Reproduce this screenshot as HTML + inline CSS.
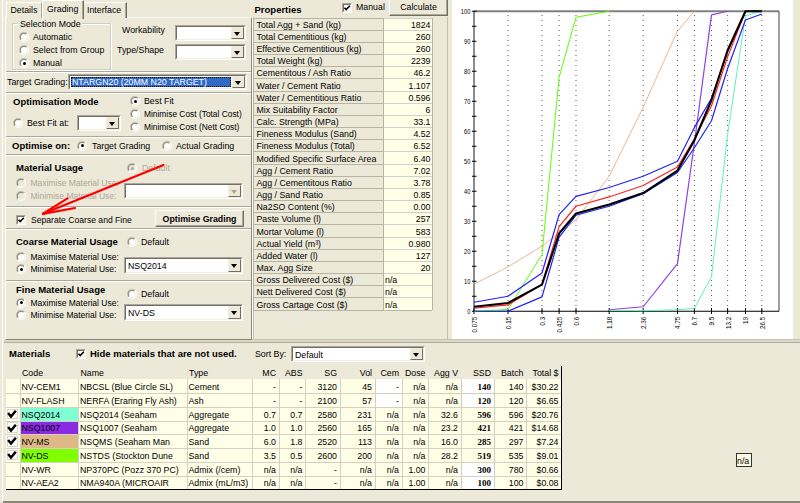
<!DOCTYPE html><html><head><meta charset="utf-8"><style>
body{margin:0;width:800px;height:503px;overflow:hidden;background:#ECE9D8;position:relative;font-family:"Liberation Sans",sans-serif;}
.t{position:absolute;white-space:nowrap;color:#000}
.r{position:absolute;box-sizing:border-box}
svg.r{position:absolute}
</style></head><body>
<div class="r" style="left:2px;top:0px;width:1px;height:501px;background:#FFFFFF"></div>
<div class="r" style="left:5px;top:17px;width:247px;height:323px;border-top:1px solid #fff;border-left:1px solid #fff;border-right:1px solid #8A887C;border-bottom:1px solid #8A887C"></div>
<div class="r" style="left:6px;top:2px;width:36px;height:16px;background:#ECE9D8;border-top:1px solid #fff;border-left:1px solid #fff;border-right:1px solid #ACA899"></div>
<div class="t" style="left:10.5px;top:3.80px;font-size:8.8px;line-height:12px;">Details</div>
<div class="r" style="left:42px;top:0px;width:42px;height:19px;background:#ECE9D8;border-top:1px solid #fff;border-left:1px solid #fff;border-right:1px solid #716F64;box-shadow:inset -1px 0 0 #ACA899"></div>
<div class="t" style="left:47px;top:2.50px;font-size:8.8px;line-height:12px;">Grading</div>
<div class="r" style="left:84px;top:2px;width:43px;height:16px;background:#ECE9D8;border-top:1px solid #fff;border-right:1px solid #716F64;box-shadow:inset -1px 0 0 #ACA899"></div>
<div class="t" style="left:87px;top:4.00px;font-size:8.8px;line-height:12px;">Interface</div>
<div class="r" style="left:12px;top:23px;width:99px;height:47px;border:1px solid #D0D0BF;box-shadow:inset 1px 1px 0 #fff, 1px 1px 0 #fff;box-sizing:border-box"></div>
<div class="r" style="left:18px;top:19px;width:64px;height:10px;background:#ECE9D8"></div>
<div class="t" style="left:20px;top:17.50px;font-size:8.8px;line-height:12px;">Selection Mode</div>
<div class="r" style="left:19.00px;top:32.00px;width:10px;height:10px;border-radius:50%;background:linear-gradient(135deg,#C0BCAE 0%,#C0BCAE 50%,#fff 50%,#fff 100%)"></div>
<div class="r" style="left:20.00px;top:33.00px;width:8px;height:8px;border-radius:50%;background:linear-gradient(135deg,#8E8C80 0%,#8E8C80 50%,#F1EFE2 50%,#F1EFE2 100%)"></div>
<div class="r" style="left:21.00px;top:34.00px;width:6px;height:6px;border-radius:50%;background:#fff"></div>
<div class="t" style="left:33px;top:31.00px;font-size:8.8px;line-height:12px;">Automatic</div>
<div class="r" style="left:19.00px;top:45.00px;width:10px;height:10px;border-radius:50%;background:linear-gradient(135deg,#C0BCAE 0%,#C0BCAE 50%,#fff 50%,#fff 100%)"></div>
<div class="r" style="left:20.00px;top:46.00px;width:8px;height:8px;border-radius:50%;background:linear-gradient(135deg,#8E8C80 0%,#8E8C80 50%,#F1EFE2 50%,#F1EFE2 100%)"></div>
<div class="r" style="left:21.00px;top:47.00px;width:6px;height:6px;border-radius:50%;background:#fff"></div>
<div class="t" style="left:33px;top:44.00px;font-size:8.8px;line-height:12px;">Select from Group</div>
<div class="r" style="left:19.00px;top:58.00px;width:10px;height:10px;border-radius:50%;background:linear-gradient(135deg,#C0BCAE 0%,#C0BCAE 50%,#fff 50%,#fff 100%)"></div>
<div class="r" style="left:20.00px;top:59.00px;width:8px;height:8px;border-radius:50%;background:linear-gradient(135deg,#8E8C80 0%,#8E8C80 50%,#F1EFE2 50%,#F1EFE2 100%)"></div>
<div class="r" style="left:21.00px;top:60.00px;width:6px;height:6px;border-radius:50%;background:#fff"></div>
<div class="r" style="left:22.50px;top:61.50px;width:3px;height:3px;border-radius:50%;background:#000"></div>
<div class="t" style="left:33px;top:57.00px;font-size:8.8px;line-height:12px;">Manual</div>
<div class="t" style="left:122px;top:24.00px;font-size:8.8px;line-height:12px;">Workability</div>
<div class="t" style="left:117px;top:43.50px;font-size:8.8px;line-height:12px;">Type/Shape</div>
<div class="r" style="left:175px;top:25px;width:71px;height:16px;background:#fff;border-top:1px solid #ACA899;border-left:1px solid #ACA899;border-right:1px solid #fff;border-bottom:1px solid #fff;box-sizing:border-box"></div>
<div class="r" style="left:176px;top:26px;width:69px;height:14px;border-top:1px solid #716F64;border-left:1px solid #716F64;border-right:1px solid #F1EFE2;border-bottom:1px solid #F1EFE2;box-sizing:border-box"></div>
<div class="r" style="left:231px;top:27px;width:13px;height:12px;background:#ECE9D8;border-top:1px solid #F1EFE2;border-left:1px solid #F1EFE2;border-right:1px solid #716F64;border-bottom:1px solid #716F64;box-sizing:border-box"></div>
<div class="r" style="left:234.00px;top:31.50px;width:0;height:0;border-left:3.5px solid transparent;border-right:3.5px solid transparent;border-top:4px solid #000"></div>
<div class="r" style="left:175px;top:44px;width:71px;height:16px;background:#fff;border-top:1px solid #ACA899;border-left:1px solid #ACA899;border-right:1px solid #fff;border-bottom:1px solid #fff;box-sizing:border-box"></div>
<div class="r" style="left:176px;top:45px;width:69px;height:14px;border-top:1px solid #716F64;border-left:1px solid #716F64;border-right:1px solid #F1EFE2;border-bottom:1px solid #F1EFE2;box-sizing:border-box"></div>
<div class="r" style="left:231px;top:46px;width:13px;height:12px;background:#ECE9D8;border-top:1px solid #F1EFE2;border-left:1px solid #F1EFE2;border-right:1px solid #716F64;border-bottom:1px solid #716F64;box-sizing:border-box"></div>
<div class="r" style="left:234.00px;top:50.50px;width:0;height:0;border-left:3.5px solid transparent;border-right:3.5px solid transparent;border-top:4px solid #000"></div>
<div class="r" style="left:6px;top:71px;width:245px;height:1px;background:#ACA899"></div>
<div class="r" style="left:6px;top:72px;width:245px;height:1px;background:#FFFFFF"></div>
<div class="t" style="left:7px;top:76.00px;font-size:8.8px;line-height:12px;">Target Grading:</div>
<div class="r" style="left:68px;top:74px;width:179px;height:16px;background:#fff;border-top:1px solid #ACA899;border-left:1px solid #ACA899;border-right:1px solid #fff;border-bottom:1px solid #fff;box-sizing:border-box"></div>
<div class="r" style="left:69px;top:75px;width:177px;height:14px;border-top:1px solid #716F64;border-left:1px solid #716F64;border-right:1px solid #F1EFE2;border-bottom:1px solid #F1EFE2;box-sizing:border-box"></div>
<div class="r" style="left:232px;top:76px;width:13px;height:12px;background:#ECE9D8;border-top:1px solid #F1EFE2;border-left:1px solid #F1EFE2;border-right:1px solid #716F64;border-bottom:1px solid #716F64;box-sizing:border-box"></div>
<div class="r" style="left:235.00px;top:80.50px;width:0;height:0;border-left:3.5px solid transparent;border-right:3.5px solid transparent;border-top:4px solid #000"></div>
<div class="r" style="left:71px;top:77px;width:160px;height:10px;background:#316AC5;outline:1px dotted #000;outline-offset:-1px"></div>
<div class="t" style="left:72px;top:76.00px;font-size:8.8px;line-height:12px;color:#fff;">NTARGN20 (20MM N20 TARGET)</div>
<div class="r" style="left:6px;top:92px;width:245px;height:1px;background:#ACA899"></div>
<div class="r" style="left:6px;top:93px;width:245px;height:1px;background:#FFFFFF"></div>
<div class="t" style="left:13px;top:95.50px;font-size:9.5px;line-height:12px;font-weight:bold;">Optimisation Mode</div>
<div class="r" style="left:13.00px;top:118.00px;width:10px;height:10px;border-radius:50%;background:linear-gradient(135deg,#C0BCAE 0%,#C0BCAE 50%,#fff 50%,#fff 100%)"></div>
<div class="r" style="left:14.00px;top:119.00px;width:8px;height:8px;border-radius:50%;background:linear-gradient(135deg,#8E8C80 0%,#8E8C80 50%,#F1EFE2 50%,#F1EFE2 100%)"></div>
<div class="r" style="left:15.00px;top:120.00px;width:6px;height:6px;border-radius:50%;background:#fff"></div>
<div class="t" style="left:27px;top:117.00px;font-size:8.8px;line-height:12px;">Best Fit at:</div>
<div class="r" style="left:77px;top:115px;width:44px;height:16px;background:#fff;border-top:1px solid #ACA899;border-left:1px solid #ACA899;border-right:1px solid #fff;border-bottom:1px solid #fff;box-sizing:border-box"></div>
<div class="r" style="left:78px;top:116px;width:42px;height:14px;border-top:1px solid #716F64;border-left:1px solid #716F64;border-right:1px solid #F1EFE2;border-bottom:1px solid #F1EFE2;box-sizing:border-box"></div>
<div class="r" style="left:106px;top:117px;width:13px;height:12px;background:#ECE9D8;border-top:1px solid #F1EFE2;border-left:1px solid #F1EFE2;border-right:1px solid #716F64;border-bottom:1px solid #716F64;box-sizing:border-box"></div>
<div class="r" style="left:109.00px;top:121.50px;width:0;height:0;border-left:3.5px solid transparent;border-right:3.5px solid transparent;border-top:4px solid #000"></div>
<div class="r" style="left:130.00px;top:96.00px;width:10px;height:10px;border-radius:50%;background:linear-gradient(135deg,#C0BCAE 0%,#C0BCAE 50%,#fff 50%,#fff 100%)"></div>
<div class="r" style="left:131.00px;top:97.00px;width:8px;height:8px;border-radius:50%;background:linear-gradient(135deg,#8E8C80 0%,#8E8C80 50%,#F1EFE2 50%,#F1EFE2 100%)"></div>
<div class="r" style="left:132.00px;top:98.00px;width:6px;height:6px;border-radius:50%;background:#fff"></div>
<div class="r" style="left:133.50px;top:99.50px;width:3px;height:3px;border-radius:50%;background:#000"></div>
<div class="t" style="left:144px;top:95.00px;font-size:8.8px;line-height:12px;">Best Fit</div>
<div class="r" style="left:130.00px;top:109.00px;width:10px;height:10px;border-radius:50%;background:linear-gradient(135deg,#C0BCAE 0%,#C0BCAE 50%,#fff 50%,#fff 100%)"></div>
<div class="r" style="left:131.00px;top:110.00px;width:8px;height:8px;border-radius:50%;background:linear-gradient(135deg,#8E8C80 0%,#8E8C80 50%,#F1EFE2 50%,#F1EFE2 100%)"></div>
<div class="r" style="left:132.00px;top:111.00px;width:6px;height:6px;border-radius:50%;background:#fff"></div>
<div class="t" style="left:144px;top:108.00px;font-size:8.4px;line-height:12px;">Minimise Cost (Total Cost)</div>
<div class="r" style="left:130.00px;top:122.00px;width:10px;height:10px;border-radius:50%;background:linear-gradient(135deg,#C0BCAE 0%,#C0BCAE 50%,#fff 50%,#fff 100%)"></div>
<div class="r" style="left:131.00px;top:123.00px;width:8px;height:8px;border-radius:50%;background:linear-gradient(135deg,#8E8C80 0%,#8E8C80 50%,#F1EFE2 50%,#F1EFE2 100%)"></div>
<div class="r" style="left:132.00px;top:124.00px;width:6px;height:6px;border-radius:50%;background:#fff"></div>
<div class="t" style="left:144px;top:121.00px;font-size:8.4px;line-height:12px;">Minimise Cost (Nett Cost)</div>
<div class="r" style="left:6px;top:136px;width:245px;height:1px;background:#ACA899"></div>
<div class="r" style="left:6px;top:137px;width:245px;height:1px;background:#FFFFFF"></div>
<div class="t" style="left:12px;top:140.00px;font-size:9.5px;line-height:12px;font-weight:bold;">Optimise on:</div>
<div class="r" style="left:77.00px;top:140.50px;width:10px;height:10px;border-radius:50%;background:linear-gradient(135deg,#C0BCAE 0%,#C0BCAE 50%,#fff 50%,#fff 100%)"></div>
<div class="r" style="left:78.00px;top:141.50px;width:8px;height:8px;border-radius:50%;background:linear-gradient(135deg,#8E8C80 0%,#8E8C80 50%,#F1EFE2 50%,#F1EFE2 100%)"></div>
<div class="r" style="left:79.00px;top:142.50px;width:6px;height:6px;border-radius:50%;background:#fff"></div>
<div class="r" style="left:80.50px;top:144.00px;width:3px;height:3px;border-radius:50%;background:#000"></div>
<div class="t" style="left:92px;top:140.00px;font-size:8.8px;line-height:12px;">Target Grading</div>
<div class="r" style="left:162.00px;top:140.50px;width:10px;height:10px;border-radius:50%;background:linear-gradient(135deg,#C0BCAE 0%,#C0BCAE 50%,#fff 50%,#fff 100%)"></div>
<div class="r" style="left:163.00px;top:141.50px;width:8px;height:8px;border-radius:50%;background:linear-gradient(135deg,#8E8C80 0%,#8E8C80 50%,#F1EFE2 50%,#F1EFE2 100%)"></div>
<div class="r" style="left:164.00px;top:142.50px;width:6px;height:6px;border-radius:50%;background:#fff"></div>
<div class="t" style="left:176px;top:140.00px;font-size:8.8px;line-height:12px;">Actual Grading</div>
<div class="r" style="left:6px;top:154px;width:245px;height:1px;background:#ACA899"></div>
<div class="r" style="left:6px;top:155px;width:245px;height:1px;background:#FFFFFF"></div>
<div class="t" style="left:16px;top:162.00px;font-size:9.5px;line-height:12px;font-weight:bold;">Material Usage</div>
<div class="r" style="left:127.00px;top:163.00px;width:10px;height:10px;border-radius:50%;background:linear-gradient(135deg,#C0BCAE 0%,#C0BCAE 50%,#fff 50%,#fff 100%)"></div>
<div class="r" style="left:128.00px;top:164.00px;width:8px;height:8px;border-radius:50%;background:linear-gradient(135deg,#8E8C80 0%,#8E8C80 50%,#F1EFE2 50%,#F1EFE2 100%)"></div>
<div class="r" style="left:129.00px;top:165.00px;width:6px;height:6px;border-radius:50%;background:#ECE9D8"></div>
<div class="r" style="left:130.50px;top:166.50px;width:3px;height:3px;border-radius:50%;background:#ACA899"></div>
<div class="t" style="left:142px;top:162.00px;font-size:8.8px;line-height:12px;color:#ACA899;">Default</div>
<div class="r" style="left:16.00px;top:178.00px;width:10px;height:10px;border-radius:50%;background:linear-gradient(135deg,#C0BCAE 0%,#C0BCAE 50%,#fff 50%,#fff 100%)"></div>
<div class="r" style="left:17.00px;top:179.00px;width:8px;height:8px;border-radius:50%;background:linear-gradient(135deg,#8E8C80 0%,#8E8C80 50%,#F1EFE2 50%,#F1EFE2 100%)"></div>
<div class="r" style="left:18.00px;top:180.00px;width:6px;height:6px;border-radius:50%;background:#ECE9D8"></div>
<div class="t" style="left:30.5px;top:177.00px;font-size:8.5px;line-height:12px;color:#ACA899;">Maximise Material Use:</div>
<div class="r" style="left:16.00px;top:191.00px;width:10px;height:10px;border-radius:50%;background:linear-gradient(135deg,#C0BCAE 0%,#C0BCAE 50%,#fff 50%,#fff 100%)"></div>
<div class="r" style="left:17.00px;top:192.00px;width:8px;height:8px;border-radius:50%;background:linear-gradient(135deg,#8E8C80 0%,#8E8C80 50%,#F1EFE2 50%,#F1EFE2 100%)"></div>
<div class="r" style="left:18.00px;top:193.00px;width:6px;height:6px;border-radius:50%;background:#ECE9D8"></div>
<div class="t" style="left:30.5px;top:190.00px;font-size:8.5px;line-height:12px;color:#ACA899;">Minimise Material Use:</div>
<div class="r" style="left:124px;top:183px;width:119px;height:16px;background:#fff;border-top:1px solid #ACA899;border-left:1px solid #ACA899;border-right:1px solid #fff;border-bottom:1px solid #fff;box-sizing:border-box"></div>
<div class="r" style="left:125px;top:184px;width:117px;height:14px;border-top:1px solid #716F64;border-left:1px solid #716F64;border-right:1px solid #F1EFE2;border-bottom:1px solid #F1EFE2;box-sizing:border-box"></div>
<div class="r" style="left:228px;top:185px;width:13px;height:12px;background:#ECE9D8;border-top:1px solid #F1EFE2;border-left:1px solid #F1EFE2;border-right:1px solid #716F64;border-bottom:1px solid #716F64;box-sizing:border-box"></div>
<div class="r" style="left:231.00px;top:189.50px;width:0;height:0;border-left:3.5px solid transparent;border-right:3.5px solid transparent;border-top:4px solid #ACA899"></div>
<div class="r" style="left:6px;top:206px;width:245px;height:1px;background:#ACA899"></div>
<div class="r" style="left:6px;top:207px;width:245px;height:1px;background:#FFFFFF"></div>
<div class="r" style="left:16.3px;top:214.6px;width:10px;height:10px;background:#fff;border-top:1px solid #ACA899;border-left:1px solid #ACA899;border-right:1px solid #fff;border-bottom:1px solid #fff;box-sizing:border-box"></div>
<div class="r" style="left:17.3px;top:215.6px;width:8px;height:8px;border-top:1px solid #716F64;border-left:1px solid #716F64;border-right:1px solid #F1EFE2;border-bottom:1px solid #F1EFE2;box-sizing:border-box"></div>
<svg class="r" style="left:16.3px;top:214.6px" width="10" height="10"><path d="M2.5 4.8 L4.2 6.6 L7.8 2.8" stroke="#000" stroke-width="1.6" fill="none"/></svg>
<div class="t" style="left:31px;top:213.50px;font-size:8.6px;line-height:12px;">Separate Coarse and Fine</div>
<div class="r" style="left:155px;top:210px;width:89px;height:17px;background:#ECE9D8;border-top:1px solid #fff;border-left:1px solid #fff;border-right:1px solid #716F64;border-bottom:1px solid #716F64;box-sizing:border-box;box-shadow:inset -1px -1px 0 #ACA899"></div>
<div class="t" style="left:155px;top:212.50px;font-size:8.8px;line-height:12px;font-weight:bold;width:89px;text-align:center;">Optimise Grading</div>
<div class="r" style="left:6px;top:228px;width:245px;height:1px;background:#ACA899"></div>
<div class="r" style="left:6px;top:229px;width:245px;height:1px;background:#FFFFFF"></div>
<div class="t" style="left:16px;top:236.00px;font-size:9.5px;line-height:12px;font-weight:bold;">Coarse Material Usage</div>
<div class="r" style="left:127.00px;top:237.00px;width:10px;height:10px;border-radius:50%;background:linear-gradient(135deg,#C0BCAE 0%,#C0BCAE 50%,#fff 50%,#fff 100%)"></div>
<div class="r" style="left:128.00px;top:238.00px;width:8px;height:8px;border-radius:50%;background:linear-gradient(135deg,#8E8C80 0%,#8E8C80 50%,#F1EFE2 50%,#F1EFE2 100%)"></div>
<div class="r" style="left:129.00px;top:239.00px;width:6px;height:6px;border-radius:50%;background:#fff"></div>
<div class="t" style="left:141px;top:236.00px;font-size:8.8px;line-height:12px;">Default</div>
<div class="r" style="left:16.00px;top:252.00px;width:10px;height:10px;border-radius:50%;background:linear-gradient(135deg,#C0BCAE 0%,#C0BCAE 50%,#fff 50%,#fff 100%)"></div>
<div class="r" style="left:17.00px;top:253.00px;width:8px;height:8px;border-radius:50%;background:linear-gradient(135deg,#8E8C80 0%,#8E8C80 50%,#F1EFE2 50%,#F1EFE2 100%)"></div>
<div class="r" style="left:18.00px;top:254.00px;width:6px;height:6px;border-radius:50%;background:#fff"></div>
<div class="t" style="left:30.5px;top:251.00px;font-size:8.5px;line-height:12px;">Maximise Material Use:</div>
<div class="r" style="left:16.00px;top:264.00px;width:10px;height:10px;border-radius:50%;background:linear-gradient(135deg,#C0BCAE 0%,#C0BCAE 50%,#fff 50%,#fff 100%)"></div>
<div class="r" style="left:17.00px;top:265.00px;width:8px;height:8px;border-radius:50%;background:linear-gradient(135deg,#8E8C80 0%,#8E8C80 50%,#F1EFE2 50%,#F1EFE2 100%)"></div>
<div class="r" style="left:18.00px;top:266.00px;width:6px;height:6px;border-radius:50%;background:#fff"></div>
<div class="r" style="left:19.50px;top:267.50px;width:3px;height:3px;border-radius:50%;background:#000"></div>
<div class="t" style="left:30.5px;top:263.00px;font-size:8.5px;line-height:12px;">Minimise Material Use:</div>
<div class="r" style="left:124px;top:257px;width:119px;height:17px;background:#fff;border-top:1px solid #ACA899;border-left:1px solid #ACA899;border-right:1px solid #fff;border-bottom:1px solid #fff;box-sizing:border-box"></div>
<div class="r" style="left:125px;top:258px;width:117px;height:15px;border-top:1px solid #716F64;border-left:1px solid #716F64;border-right:1px solid #F1EFE2;border-bottom:1px solid #F1EFE2;box-sizing:border-box"></div>
<div class="r" style="left:228px;top:259px;width:13px;height:13px;background:#ECE9D8;border-top:1px solid #F1EFE2;border-left:1px solid #F1EFE2;border-right:1px solid #716F64;border-bottom:1px solid #716F64;box-sizing:border-box"></div>
<div class="r" style="left:231.00px;top:264.00px;width:0;height:0;border-left:3.5px solid transparent;border-right:3.5px solid transparent;border-top:4px solid #000"></div>
<div class="t" style="left:128px;top:259.50px;font-size:8.8px;line-height:12px;">NSQ2014</div>
<div class="r" style="left:6px;top:280px;width:245px;height:1px;background:#ACA899"></div>
<div class="r" style="left:6px;top:281px;width:245px;height:1px;background:#FFFFFF"></div>
<div class="t" style="left:16px;top:284.00px;font-size:9.5px;line-height:12px;font-weight:bold;">Fine Material Usage</div>
<div class="r" style="left:127.00px;top:289.00px;width:10px;height:10px;border-radius:50%;background:linear-gradient(135deg,#C0BCAE 0%,#C0BCAE 50%,#fff 50%,#fff 100%)"></div>
<div class="r" style="left:128.00px;top:290.00px;width:8px;height:8px;border-radius:50%;background:linear-gradient(135deg,#8E8C80 0%,#8E8C80 50%,#F1EFE2 50%,#F1EFE2 100%)"></div>
<div class="r" style="left:129.00px;top:291.00px;width:6px;height:6px;border-radius:50%;background:#fff"></div>
<div class="t" style="left:141px;top:288.00px;font-size:8.8px;line-height:12px;">Default</div>
<div class="r" style="left:16.00px;top:297.50px;width:10px;height:10px;border-radius:50%;background:linear-gradient(135deg,#C0BCAE 0%,#C0BCAE 50%,#fff 50%,#fff 100%)"></div>
<div class="r" style="left:17.00px;top:298.50px;width:8px;height:8px;border-radius:50%;background:linear-gradient(135deg,#8E8C80 0%,#8E8C80 50%,#F1EFE2 50%,#F1EFE2 100%)"></div>
<div class="r" style="left:18.00px;top:299.50px;width:6px;height:6px;border-radius:50%;background:#fff"></div>
<div class="r" style="left:19.50px;top:301.00px;width:3px;height:3px;border-radius:50%;background:#000"></div>
<div class="t" style="left:30.5px;top:296.50px;font-size:8.5px;line-height:12px;">Maximise Material Use:</div>
<div class="r" style="left:16.00px;top:310.00px;width:10px;height:10px;border-radius:50%;background:linear-gradient(135deg,#C0BCAE 0%,#C0BCAE 50%,#fff 50%,#fff 100%)"></div>
<div class="r" style="left:17.00px;top:311.00px;width:8px;height:8px;border-radius:50%;background:linear-gradient(135deg,#8E8C80 0%,#8E8C80 50%,#F1EFE2 50%,#F1EFE2 100%)"></div>
<div class="r" style="left:18.00px;top:312.00px;width:6px;height:6px;border-radius:50%;background:#fff"></div>
<div class="t" style="left:30.5px;top:309.00px;font-size:8.5px;line-height:12px;">Minimise Material Use:</div>
<div class="r" style="left:124px;top:304px;width:119px;height:17px;background:#fff;border-top:1px solid #ACA899;border-left:1px solid #ACA899;border-right:1px solid #fff;border-bottom:1px solid #fff;box-sizing:border-box"></div>
<div class="r" style="left:125px;top:305px;width:117px;height:15px;border-top:1px solid #716F64;border-left:1px solid #716F64;border-right:1px solid #F1EFE2;border-bottom:1px solid #F1EFE2;box-sizing:border-box"></div>
<div class="r" style="left:228px;top:306px;width:13px;height:13px;background:#ECE9D8;border-top:1px solid #F1EFE2;border-left:1px solid #F1EFE2;border-right:1px solid #716F64;border-bottom:1px solid #716F64;box-sizing:border-box"></div>
<div class="r" style="left:231.00px;top:311.00px;width:0;height:0;border-left:3.5px solid transparent;border-right:3.5px solid transparent;border-top:4px solid #000"></div>
<div class="t" style="left:128px;top:306.50px;font-size:8.8px;line-height:12px;">NV-DS</div>
<div class="t" style="left:254.5px;top:3.60px;font-size:9.5px;line-height:12px;font-weight:bold;">Properties</div>
<div class="r" style="left:342px;top:2.5px;width:10px;height:10px;background:#fff;border-top:1px solid #ACA899;border-left:1px solid #ACA899;border-right:1px solid #fff;border-bottom:1px solid #fff;box-sizing:border-box"></div>
<div class="r" style="left:343px;top:3.5px;width:8px;height:8px;border-top:1px solid #716F64;border-left:1px solid #716F64;border-right:1px solid #F1EFE2;border-bottom:1px solid #F1EFE2;box-sizing:border-box"></div>
<svg class="r" style="left:342px;top:2.5px" width="10" height="10"><path d="M2.5 4.8 L4.2 6.6 L7.8 2.8" stroke="#000" stroke-width="1.6" fill="none"/></svg>
<div class="t" style="left:356px;top:1.00px;font-size:8.8px;line-height:12px;">Manual</div>
<div class="r" style="left:389px;top:-3.5px;width:59px;height:19.5px;background:#ECE9D8;border-top:1px solid #fff;border-left:1px solid #fff;border-right:1px solid #716F64;border-bottom:1px solid #716F64;box-sizing:border-box;box-shadow:inset -1px -1px 0 #ACA899"></div>
<div class="t" style="left:389px;top:0.85px;font-size:8.8px;line-height:12px;width:59px;text-align:center;">Calculate</div>
<div class="r" style="left:252px;top:17px;width:196px;height:323px;border-left:1px solid #fff;border-right:1px solid #C4C0B0;border-bottom:1px solid #C4C0B0"></div>
<div class="r" style="left:253px;top:17px;width:1px;height:323px;background:#C4C0B0"></div>
<div class="r" style="left:253px;top:17.5px;width:179px;height:292px;background:#ECE9D8"></div>
<div class="r" style="left:383px;top:17.5px;width:49px;height:292px;background:#FFFFE8"></div>
<div class="r" style="left:253px;top:17.5px;width:130px;height:1px;background:#B8B4A4"></div>
<div class="r" style="left:383px;top:17.5px;width:49px;height:1px;background:#D0D0CC"></div>
<div class="t" style="left:256.5px;top:18.68px;font-size:8.8px;line-height:12px;">Total Agg + Sand (kg)</div>
<div class="t" style="right:369.5px;top:18.68px;font-size:8.8px;line-height:12px;">1824</div>
<div class="r" style="left:253px;top:29.666666666666664px;width:130px;height:1px;background:#B8B4A4"></div>
<div class="r" style="left:383px;top:29.666666666666664px;width:49px;height:1px;background:#D0D0CC"></div>
<div class="t" style="left:256.5px;top:30.85px;font-size:8.8px;line-height:12px;">Total Cementitious (kg)</div>
<div class="t" style="right:369.5px;top:30.85px;font-size:8.8px;line-height:12px;">260</div>
<div class="r" style="left:253px;top:41.83333333333333px;width:130px;height:1px;background:#B8B4A4"></div>
<div class="r" style="left:383px;top:41.83333333333333px;width:49px;height:1px;background:#D0D0CC"></div>
<div class="t" style="left:256.5px;top:43.02px;font-size:8.8px;line-height:12px;">Effective Cementitious (kg)</div>
<div class="t" style="right:369.5px;top:43.02px;font-size:8.8px;line-height:12px;">260</div>
<div class="r" style="left:253px;top:54.0px;width:130px;height:1px;background:#B8B4A4"></div>
<div class="r" style="left:383px;top:54.0px;width:49px;height:1px;background:#D0D0CC"></div>
<div class="t" style="left:256.5px;top:55.18px;font-size:8.8px;line-height:12px;">Total Weight (kg)</div>
<div class="t" style="right:369.5px;top:55.18px;font-size:8.8px;line-height:12px;">2239</div>
<div class="r" style="left:253px;top:66.16666666666666px;width:130px;height:1px;background:#B8B4A4"></div>
<div class="r" style="left:383px;top:66.16666666666666px;width:49px;height:1px;background:#D0D0CC"></div>
<div class="t" style="left:256.5px;top:67.35px;font-size:8.8px;line-height:12px;">Cementitous / Ash Ratio</div>
<div class="t" style="right:369.5px;top:67.35px;font-size:8.8px;line-height:12px;">46.2</div>
<div class="r" style="left:253px;top:78.33333333333333px;width:130px;height:1px;background:#B8B4A4"></div>
<div class="r" style="left:383px;top:78.33333333333333px;width:49px;height:1px;background:#D0D0CC"></div>
<div class="t" style="left:256.5px;top:79.52px;font-size:8.8px;line-height:12px;">Water / Cement Ratio</div>
<div class="t" style="right:369.5px;top:79.52px;font-size:8.8px;line-height:12px;">1.107</div>
<div class="r" style="left:253px;top:90.5px;width:130px;height:1px;background:#B8B4A4"></div>
<div class="r" style="left:383px;top:90.5px;width:49px;height:1px;background:#D0D0CC"></div>
<div class="t" style="left:256.5px;top:91.68px;font-size:8.8px;line-height:12px;">Water / Cementitious Ratio</div>
<div class="t" style="right:369.5px;top:91.68px;font-size:8.8px;line-height:12px;">0.596</div>
<div class="r" style="left:253px;top:102.66666666666666px;width:130px;height:1px;background:#B8B4A4"></div>
<div class="r" style="left:383px;top:102.66666666666666px;width:49px;height:1px;background:#D0D0CC"></div>
<div class="t" style="left:256.5px;top:103.85px;font-size:8.8px;line-height:12px;">Mix Suitability Factor</div>
<div class="t" style="right:369.5px;top:103.85px;font-size:8.8px;line-height:12px;">6</div>
<div class="r" style="left:253px;top:114.83333333333333px;width:130px;height:1px;background:#B8B4A4"></div>
<div class="r" style="left:383px;top:114.83333333333333px;width:49px;height:1px;background:#D0D0CC"></div>
<div class="t" style="left:256.5px;top:116.02px;font-size:8.8px;line-height:12px;">Calc. Strength (MPa)</div>
<div class="t" style="right:369.5px;top:116.02px;font-size:8.8px;line-height:12px;">33.1</div>
<div class="r" style="left:253px;top:127.0px;width:130px;height:1px;background:#B8B4A4"></div>
<div class="r" style="left:383px;top:127.0px;width:49px;height:1px;background:#D0D0CC"></div>
<div class="t" style="left:256.5px;top:128.18px;font-size:8.8px;line-height:12px;">Fineness Modulus (Sand)</div>
<div class="t" style="right:369.5px;top:128.18px;font-size:8.8px;line-height:12px;">4.52</div>
<div class="r" style="left:253px;top:139.16666666666666px;width:130px;height:1px;background:#B8B4A4"></div>
<div class="r" style="left:383px;top:139.16666666666666px;width:49px;height:1px;background:#D0D0CC"></div>
<div class="t" style="left:256.5px;top:140.35px;font-size:8.8px;line-height:12px;">Fineness Modulus (Total)</div>
<div class="t" style="right:369.5px;top:140.35px;font-size:8.8px;line-height:12px;">6.52</div>
<div class="r" style="left:253px;top:151.33333333333331px;width:130px;height:1px;background:#B8B4A4"></div>
<div class="r" style="left:383px;top:151.33333333333331px;width:49px;height:1px;background:#D0D0CC"></div>
<div class="t" style="left:256.5px;top:152.52px;font-size:8.8px;line-height:12px;">Modified Specific Surface Area</div>
<div class="t" style="right:369.5px;top:152.52px;font-size:8.8px;line-height:12px;">6.40</div>
<div class="r" style="left:253px;top:163.5px;width:130px;height:1px;background:#B8B4A4"></div>
<div class="r" style="left:383px;top:163.5px;width:49px;height:1px;background:#D0D0CC"></div>
<div class="t" style="left:256.5px;top:164.68px;font-size:8.8px;line-height:12px;">Agg / Cement Ratio</div>
<div class="t" style="right:369.5px;top:164.68px;font-size:8.8px;line-height:12px;">7.02</div>
<div class="r" style="left:253px;top:175.66666666666666px;width:130px;height:1px;background:#B8B4A4"></div>
<div class="r" style="left:383px;top:175.66666666666666px;width:49px;height:1px;background:#D0D0CC"></div>
<div class="t" style="left:256.5px;top:176.85px;font-size:8.8px;line-height:12px;">Agg / Cementitous Ratio</div>
<div class="t" style="right:369.5px;top:176.85px;font-size:8.8px;line-height:12px;">3.78</div>
<div class="r" style="left:253px;top:187.83333333333331px;width:130px;height:1px;background:#B8B4A4"></div>
<div class="r" style="left:383px;top:187.83333333333331px;width:49px;height:1px;background:#D0D0CC"></div>
<div class="t" style="left:256.5px;top:189.02px;font-size:8.8px;line-height:12px;">Agg / Sand Ratio</div>
<div class="t" style="right:369.5px;top:189.02px;font-size:8.8px;line-height:12px;">0.85</div>
<div class="r" style="left:253px;top:200.0px;width:130px;height:1px;background:#B8B4A4"></div>
<div class="r" style="left:383px;top:200.0px;width:49px;height:1px;background:#D0D0CC"></div>
<div class="t" style="left:256.5px;top:201.18px;font-size:8.8px;line-height:12px;">Na2SO Content (%)</div>
<div class="t" style="right:369.5px;top:201.18px;font-size:8.8px;line-height:12px;">0.00</div>
<div class="r" style="left:253px;top:212.16666666666666px;width:130px;height:1px;background:#B8B4A4"></div>
<div class="r" style="left:383px;top:212.16666666666666px;width:49px;height:1px;background:#D0D0CC"></div>
<div class="t" style="left:256.5px;top:213.35px;font-size:8.8px;line-height:12px;">Paste Volume (l)</div>
<div class="t" style="right:369.5px;top:213.35px;font-size:8.8px;line-height:12px;">257</div>
<div class="r" style="left:253px;top:224.33333333333331px;width:130px;height:1px;background:#B8B4A4"></div>
<div class="r" style="left:383px;top:224.33333333333331px;width:49px;height:1px;background:#D0D0CC"></div>
<div class="t" style="left:256.5px;top:225.52px;font-size:8.8px;line-height:12px;">Mortar Volume (l)</div>
<div class="t" style="right:369.5px;top:225.52px;font-size:8.8px;line-height:12px;">583</div>
<div class="r" style="left:253px;top:236.5px;width:130px;height:1px;background:#B8B4A4"></div>
<div class="r" style="left:383px;top:236.5px;width:49px;height:1px;background:#D0D0CC"></div>
<div class="t" style="left:256.5px;top:237.68px;font-size:8.8px;line-height:12px;">Actual Yield (m&sup3;)</div>
<div class="t" style="right:369.5px;top:237.68px;font-size:8.8px;line-height:12px;">0.980</div>
<div class="r" style="left:253px;top:248.66666666666666px;width:130px;height:1px;background:#B8B4A4"></div>
<div class="r" style="left:383px;top:248.66666666666666px;width:49px;height:1px;background:#D0D0CC"></div>
<div class="t" style="left:256.5px;top:249.85px;font-size:8.8px;line-height:12px;">Added Water (l)</div>
<div class="t" style="right:369.5px;top:249.85px;font-size:8.8px;line-height:12px;">127</div>
<div class="r" style="left:253px;top:260.8333333333333px;width:130px;height:1px;background:#B8B4A4"></div>
<div class="r" style="left:383px;top:260.8333333333333px;width:49px;height:1px;background:#D0D0CC"></div>
<div class="t" style="left:256.5px;top:262.02px;font-size:8.8px;line-height:12px;">Max. Agg Size</div>
<div class="t" style="right:369.5px;top:262.02px;font-size:8.8px;line-height:12px;">20</div>
<div class="r" style="left:253px;top:273.0px;width:130px;height:1px;background:#B8B4A4"></div>
<div class="r" style="left:383px;top:273.0px;width:49px;height:1px;background:#D0D0CC"></div>
<div class="t" style="left:256.5px;top:274.18px;font-size:8.8px;line-height:12px;">Gross Delivered Cost ($)</div>
<div class="t" style="left:385px;top:274.18px;font-size:8.8px;line-height:12px;">n/a</div>
<div class="r" style="left:253px;top:285.16666666666663px;width:130px;height:1px;background:#B8B4A4"></div>
<div class="r" style="left:383px;top:285.16666666666663px;width:49px;height:1px;background:#D0D0CC"></div>
<div class="t" style="left:256.5px;top:286.35px;font-size:8.8px;line-height:12px;">Nett Delivered Cost ($)</div>
<div class="t" style="left:385px;top:286.35px;font-size:8.8px;line-height:12px;">n/a</div>
<div class="r" style="left:253px;top:297.3333333333333px;width:130px;height:1px;background:#B8B4A4"></div>
<div class="r" style="left:383px;top:297.3333333333333px;width:49px;height:1px;background:#D0D0CC"></div>
<div class="t" style="left:256.5px;top:298.52px;font-size:8.8px;line-height:12px;">Gross Cartage Cost ($)</div>
<div class="t" style="left:385px;top:298.52px;font-size:8.8px;line-height:12px;">n/a</div>
<div class="r" style="left:253px;top:309.5px;width:179px;height:1px;background:#B8B4A4"></div>
<div class="r" style="left:253px;top:17.5px;width:1px;height:292px;background:#B8B4A4"></div>
<div class="r" style="left:383px;top:17.5px;width:1px;height:292px;background:#B8B4A4"></div>
<div class="r" style="left:432px;top:17.5px;width:1px;height:292px;background:#B8B4A4"></div>
<div class="r" style="left:452px;top:0px;width:341px;height:340px;background:#fff"></div>
<svg class="r" style="left:0;top:0" width="800" height="503">
<line x1="508.00" y1="15" x2="508.00" y2="311.25" stroke="#000" stroke-width="1" stroke-dasharray="1 4" opacity="0.65"/>
<line x1="542.00" y1="15" x2="542.00" y2="311.25" stroke="#000" stroke-width="1" stroke-dasharray="1 4" opacity="0.65"/>
<line x1="559.09" y1="15" x2="559.09" y2="311.25" stroke="#000" stroke-width="1" stroke-dasharray="1 4" opacity="0.65"/>
<line x1="576.00" y1="15" x2="576.00" y2="311.25" stroke="#000" stroke-width="1" stroke-dasharray="1 4" opacity="0.65"/>
<line x1="609.18" y1="15" x2="609.18" y2="311.25" stroke="#000" stroke-width="1" stroke-dasharray="1 4" opacity="0.65"/>
<line x1="643.18" y1="15" x2="643.18" y2="311.25" stroke="#000" stroke-width="1" stroke-dasharray="1 4" opacity="0.65"/>
<line x1="677.49" y1="15" x2="677.49" y2="311.25" stroke="#000" stroke-width="1" stroke-dasharray="1 4" opacity="0.65"/>
<line x1="694.36" y1="15" x2="694.36" y2="311.25" stroke="#000" stroke-width="1" stroke-dasharray="1 4" opacity="0.65"/>
<line x1="711.49" y1="15" x2="711.49" y2="311.25" stroke="#000" stroke-width="1" stroke-dasharray="1 4" opacity="0.65"/>
<line x1="727.62" y1="15" x2="727.62" y2="311.25" stroke="#000" stroke-width="1" stroke-dasharray="1 4" opacity="0.65"/>
<line x1="745.49" y1="15" x2="745.49" y2="311.25" stroke="#000" stroke-width="1" stroke-dasharray="1 4" opacity="0.65"/>
<line x1="761.81" y1="15" x2="761.81" y2="311.25" stroke="#000" stroke-width="1" stroke-dasharray="1 4" opacity="0.65"/>
<line x1="474" y1="11.25" x2="779" y2="11.25" stroke="#808080" stroke-width="1.8"/>
<line x1="474" y1="11.25" x2="474" y2="311.25" stroke="#808080" stroke-width="1.8"/>
<line x1="779" y1="11.25" x2="779" y2="311.25" stroke="#404040" stroke-width="1"/>
<line x1="474" y1="311.25" x2="779" y2="311.25" stroke="#000" stroke-width="1.2"/>
<line x1="472" y1="311.25" x2="476.5" y2="311.25" stroke="#000" stroke-width="1"/>
<line x1="472" y1="296.25" x2="476.5" y2="296.25" stroke="#000" stroke-width="1"/>
<line x1="472" y1="281.25" x2="476.5" y2="281.25" stroke="#000" stroke-width="1"/>
<line x1="472" y1="266.25" x2="476.5" y2="266.25" stroke="#000" stroke-width="1"/>
<line x1="472" y1="251.25" x2="476.5" y2="251.25" stroke="#000" stroke-width="1"/>
<line x1="472" y1="236.25" x2="476.5" y2="236.25" stroke="#000" stroke-width="1"/>
<line x1="472" y1="221.25" x2="476.5" y2="221.25" stroke="#000" stroke-width="1"/>
<line x1="472" y1="206.25" x2="476.5" y2="206.25" stroke="#000" stroke-width="1"/>
<line x1="472" y1="191.25" x2="476.5" y2="191.25" stroke="#000" stroke-width="1"/>
<line x1="472" y1="176.25" x2="476.5" y2="176.25" stroke="#000" stroke-width="1"/>
<line x1="472" y1="161.25" x2="476.5" y2="161.25" stroke="#000" stroke-width="1"/>
<line x1="472" y1="146.25" x2="476.5" y2="146.25" stroke="#000" stroke-width="1"/>
<line x1="472" y1="131.25" x2="476.5" y2="131.25" stroke="#000" stroke-width="1"/>
<line x1="472" y1="116.25" x2="476.5" y2="116.25" stroke="#000" stroke-width="1"/>
<line x1="472" y1="101.25" x2="476.5" y2="101.25" stroke="#000" stroke-width="1"/>
<line x1="472" y1="86.25" x2="476.5" y2="86.25" stroke="#000" stroke-width="1"/>
<line x1="472" y1="71.25" x2="476.5" y2="71.25" stroke="#000" stroke-width="1"/>
<line x1="472" y1="56.25" x2="476.5" y2="56.25" stroke="#000" stroke-width="1"/>
<line x1="472" y1="41.25" x2="476.5" y2="41.25" stroke="#000" stroke-width="1"/>
<line x1="472" y1="26.25" x2="476.5" y2="26.25" stroke="#000" stroke-width="1"/>
<line x1="472" y1="11.25" x2="476.5" y2="11.25" stroke="#000" stroke-width="1"/>
<line x1="474.00" y1="308" x2="474.00" y2="314" stroke="#000" stroke-width="1"/>
<line x1="508.00" y1="308" x2="508.00" y2="314" stroke="#000" stroke-width="1"/>
<line x1="542.00" y1="308" x2="542.00" y2="314" stroke="#000" stroke-width="1"/>
<line x1="559.09" y1="308" x2="559.09" y2="314" stroke="#000" stroke-width="1"/>
<line x1="576.00" y1="308" x2="576.00" y2="314" stroke="#000" stroke-width="1"/>
<line x1="609.18" y1="308" x2="609.18" y2="314" stroke="#000" stroke-width="1"/>
<line x1="643.18" y1="308" x2="643.18" y2="314" stroke="#000" stroke-width="1"/>
<line x1="677.49" y1="308" x2="677.49" y2="314" stroke="#000" stroke-width="1"/>
<line x1="694.36" y1="308" x2="694.36" y2="314" stroke="#000" stroke-width="1"/>
<line x1="711.49" y1="308" x2="711.49" y2="314" stroke="#000" stroke-width="1"/>
<line x1="727.62" y1="308" x2="727.62" y2="314" stroke="#000" stroke-width="1"/>
<line x1="745.49" y1="308" x2="745.49" y2="314" stroke="#000" stroke-width="1"/>
<line x1="761.81" y1="308" x2="761.81" y2="314" stroke="#000" stroke-width="1"/>
<polyline points="474.00,284.25 508.00,266.85 542.00,246.15 559.09,233.25 576.00,219.75 609.18,176.25 643.18,107.25 677.49,31.05 694.36,11.25" fill="none" stroke="#E8B890" stroke-width="1" stroke-linejoin="round"/>
<polyline points="474.00,311.25 508.00,309.45 542.00,254.55 559.09,77.25 576.00,17.25 609.18,11.25" fill="none" stroke="#60FF00" stroke-width="1" stroke-linejoin="round"/>
<polyline points="609.18,309.75 643.18,306.75 677.49,263.55 694.36,143.25 711.49,14.85 727.62,11.25" fill="none" stroke="#9040E0" stroke-width="1.2" stroke-linejoin="round"/>
<polyline points="609.18,310.35 643.18,310.65 677.49,309.75 694.36,308.25 711.49,276.75 727.62,134.25 745.49,15.75 761.81,11.25" fill="none" stroke="#60F0C0" stroke-width="1" stroke-linejoin="round"/>
<polyline points="474.00,302.25 508.00,296.25 542.00,273.00 559.09,214.65 576.00,196.35 609.18,187.50 643.18,176.25 677.49,161.25 694.36,127.65 711.49,98.25 727.62,51.75 745.49,11.25 761.81,11.25" fill="none" stroke="#2020FF" stroke-width="1.2" stroke-linejoin="round"/>
<polyline points="474.00,311.25 508.00,311.25 542.00,296.85 559.09,237.45 576.00,215.25 609.18,206.25 643.18,193.65 677.49,172.50 694.36,147.75 711.49,120.75 727.62,68.55 745.49,19.95 761.81,13.95" fill="none" stroke="#2020FF" stroke-width="1.2" stroke-linejoin="round"/>
<polyline points="474.00,308.25 508.00,304.95 542.00,284.25 559.09,226.65 576.00,206.25 609.18,196.95 643.18,185.55 677.49,166.95 694.36,139.05 711.49,105.75 727.62,56.85 745.49,11.25 761.81,11.25" fill="none" stroke="#FF2020" stroke-width="1.2" stroke-linejoin="round"/>
<polyline points="474.00,306.75 508.00,303.00 542.00,284.55 559.09,233.55 576.00,213.45 609.18,204.45 643.18,193.05 677.49,170.55 694.36,140.25 711.49,100.05 727.62,50.25 745.49,11.25 761.81,11.25" fill="none" stroke="#000000" stroke-width="2.1" stroke-linejoin="round"/>
</svg>
<svg class="r" style="left:0;top:0" width="800" height="503"><g font-family="Liberation Sans, sans-serif" fill="#000">
<text x="470.3" y="313.85" font-size="7.2" text-anchor="end" textLength="3.15" lengthAdjust="spacingAndGlyphs">0</text>
<text x="470.3" y="283.85" font-size="7.2" text-anchor="end" textLength="6.30" lengthAdjust="spacingAndGlyphs">10</text>
<text x="470.3" y="253.85" font-size="7.2" text-anchor="end" textLength="6.30" lengthAdjust="spacingAndGlyphs">20</text>
<text x="470.3" y="223.85" font-size="7.2" text-anchor="end" textLength="6.30" lengthAdjust="spacingAndGlyphs">30</text>
<text x="470.3" y="193.85" font-size="7.2" text-anchor="end" textLength="6.30" lengthAdjust="spacingAndGlyphs">40</text>
<text x="470.3" y="163.85" font-size="7.2" text-anchor="end" textLength="6.30" lengthAdjust="spacingAndGlyphs">50</text>
<text x="470.3" y="133.85" font-size="7.2" text-anchor="end" textLength="6.30" lengthAdjust="spacingAndGlyphs">60</text>
<text x="470.3" y="103.85" font-size="7.2" text-anchor="end" textLength="6.30" lengthAdjust="spacingAndGlyphs">70</text>
<text x="470.3" y="73.85" font-size="7.2" text-anchor="end" textLength="6.30" lengthAdjust="spacingAndGlyphs">80</text>
<text x="470.3" y="43.85" font-size="7.2" text-anchor="end" textLength="6.30" lengthAdjust="spacingAndGlyphs">90</text>
<text x="470.3" y="13.85" font-size="7.2" text-anchor="end" textLength="9.45" lengthAdjust="spacingAndGlyphs">100</text>
<text transform="translate(477.00,316.8) rotate(-90)" font-size="7.3" text-anchor="end" textLength="15.70" lengthAdjust="spacingAndGlyphs">0.075</text>
<text transform="translate(511.00,316.8) rotate(-90)" font-size="7.3" text-anchor="end" textLength="12.15" lengthAdjust="spacingAndGlyphs">0.15</text>
<text transform="translate(545.00,316.8) rotate(-90)" font-size="7.3" text-anchor="end" textLength="8.60" lengthAdjust="spacingAndGlyphs">0.3</text>
<text transform="translate(562.09,316.8) rotate(-90)" font-size="7.3" text-anchor="end" textLength="15.70" lengthAdjust="spacingAndGlyphs">0.425</text>
<text transform="translate(579.00,316.8) rotate(-90)" font-size="7.3" text-anchor="end" textLength="8.60" lengthAdjust="spacingAndGlyphs">0.6</text>
<text transform="translate(612.18,316.8) rotate(-90)" font-size="7.3" text-anchor="end" textLength="12.15" lengthAdjust="spacingAndGlyphs">1.18</text>
<text transform="translate(646.18,316.8) rotate(-90)" font-size="7.3" text-anchor="end" textLength="12.15" lengthAdjust="spacingAndGlyphs">2.36</text>
<text transform="translate(680.49,316.8) rotate(-90)" font-size="7.3" text-anchor="end" textLength="12.15" lengthAdjust="spacingAndGlyphs">4.75</text>
<text transform="translate(697.36,316.8) rotate(-90)" font-size="7.3" text-anchor="end" textLength="8.60" lengthAdjust="spacingAndGlyphs">6.7</text>
<text transform="translate(714.49,316.8) rotate(-90)" font-size="7.3" text-anchor="end" textLength="8.60" lengthAdjust="spacingAndGlyphs">9.5</text>
<text transform="translate(730.62,316.8) rotate(-90)" font-size="7.3" text-anchor="end" textLength="12.15" lengthAdjust="spacingAndGlyphs">13.2</text>
<text transform="translate(748.49,316.8) rotate(-90)" font-size="7.3" text-anchor="end" textLength="7.10" lengthAdjust="spacingAndGlyphs">19</text>
<text transform="translate(764.81,316.8) rotate(-90)" font-size="7.3" text-anchor="end" textLength="12.15" lengthAdjust="spacingAndGlyphs">26.5</text>
</g></svg>
<div class="r" style="left:252px;top:339px;width:548px;height:1px;background:#C8C4B4"></div>
<div class="r" style="left:4px;top:340px;width:796px;height:2px;background:#DCD8C8"></div>
<div class="r" style="left:4px;top:342px;width:796px;height:1px;background:#B0AC9C"></div>
<div class="t" style="left:9px;top:348.10px;font-size:9.5px;line-height:12px;font-weight:bold;">Materials</div>
<div class="r" style="left:76px;top:349px;width:10px;height:10px;background:#fff;border-top:1px solid #ACA899;border-left:1px solid #ACA899;border-right:1px solid #fff;border-bottom:1px solid #fff;box-sizing:border-box"></div>
<div class="r" style="left:77px;top:350px;width:8px;height:8px;border-top:1px solid #716F64;border-left:1px solid #716F64;border-right:1px solid #F1EFE2;border-bottom:1px solid #F1EFE2;box-sizing:border-box"></div>
<svg class="r" style="left:76px;top:349px" width="10" height="10"><path d="M2.5 4.8 L4.2 6.6 L7.8 2.8" stroke="#000" stroke-width="1.6" fill="none"/></svg>
<div class="t" style="left:90px;top:348.10px;font-size:9.5px;line-height:12px;font-weight:bold;">Hide materials that are not used.</div>
<div class="t" style="left:255px;top:348.10px;font-size:8.8px;line-height:12px;">Sort By:</div>
<div class="r" style="left:291px;top:346px;width:134px;height:16px;background:#fff;border-top:1px solid #ACA899;border-left:1px solid #ACA899;border-right:1px solid #fff;border-bottom:1px solid #fff;box-sizing:border-box"></div>
<div class="r" style="left:292px;top:347px;width:132px;height:14px;border-top:1px solid #716F64;border-left:1px solid #716F64;border-right:1px solid #F1EFE2;border-bottom:1px solid #F1EFE2;box-sizing:border-box"></div>
<div class="r" style="left:410px;top:348px;width:13px;height:12px;background:#ECE9D8;border-top:1px solid #F1EFE2;border-left:1px solid #F1EFE2;border-right:1px solid #716F64;border-bottom:1px solid #716F64;box-sizing:border-box"></div>
<div class="r" style="left:413.00px;top:352.50px;width:0;height:0;border-left:3.5px solid transparent;border-right:3.5px solid transparent;border-top:4px solid #000"></div>
<div class="t" style="left:295px;top:348.60px;font-size:8.8px;line-height:12px;">Default</div>
<div class="t" style="left:22.0px;top:366.60px;font-size:8.8px;line-height:12px;">Code</div>
<div class="t" style="left:80.5px;top:366.60px;font-size:8.8px;line-height:12px;">Name</div>
<div class="t" style="left:189.0px;top:366.60px;font-size:8.8px;line-height:12px;">Type</div>
<div class="t" style="right:524.0px;top:366.60px;font-size:8.8px;line-height:12px;">MC</div>
<div class="t" style="right:497.5px;top:366.60px;font-size:8.8px;line-height:12px;">ABS</div>
<div class="t" style="right:463.0px;top:366.60px;font-size:8.8px;line-height:12px;">SG</div>
<div class="t" style="right:428.0px;top:366.60px;font-size:8.8px;line-height:12px;">Vol</div>
<div class="t" style="right:401.0px;top:366.60px;font-size:8.8px;line-height:12px;">Cem</div>
<div class="t" style="right:374.5px;top:366.60px;font-size:8.8px;line-height:12px;">Dose</div>
<div class="t" style="right:342.0px;top:366.60px;font-size:8.8px;line-height:12px;">Agg V</div>
<div class="t" style="right:309.0px;top:366.60px;font-size:8.8px;line-height:12px;">SSD</div>
<div class="t" style="right:276.5px;top:366.60px;font-size:8.8px;line-height:12px;">Batch</div>
<div class="t" style="right:241.5px;top:366.60px;font-size:8.8px;line-height:12px;">Total $</div>
<div class="r" style="left:6px;top:379.25px;width:555px;height:110.0px;background:#FFFFE8"></div>
<div class="r" style="left:460.5px;top:379.25px;width:33.0px;height:13.75px;background:#fff"></div>
<div class="r" style="left:374.5px;top:379.25px;width:27.0px;height:13.75px;background:#fff"></div>
<div class="t" style="left:21.5px;top:381.23px;font-size:8.8px;line-height:12px;">NV-CEM1</div>
<div class="t" style="left:80px;top:381.23px;font-size:8.8px;line-height:12px;">NBCSL (Blue Circle SL)</div>
<div class="t" style="left:188.5px;top:381.23px;font-size:8.8px;line-height:12px;">Cement</div>
<div class="t" style="right:524.0px;top:381.23px;font-size:8.8px;line-height:12px;">-</div>
<div class="t" style="right:497.5px;top:381.23px;font-size:8.8px;line-height:12px;">-</div>
<div class="t" style="right:463.0px;top:381.23px;font-size:8.8px;line-height:12px;">3120</div>
<div class="t" style="right:428.0px;top:381.23px;font-size:8.8px;line-height:12px;">45</div>
<div class="t" style="right:401.0px;top:381.23px;font-size:8.8px;line-height:12px;">-</div>
<div class="t" style="right:374.5px;top:381.23px;font-size:8.8px;line-height:12px;">n/a</div>
<div class="t" style="right:342.0px;top:381.23px;font-size:8.8px;line-height:12px;">n/a</div>
<div class="t" style="right:309.0px;top:381.23px;font-size:9px;line-height:12px;font-weight:bold;font-family:'Liberation Serif',serif;">140</div>
<div class="t" style="right:276.5px;top:381.23px;font-size:8.8px;line-height:12px;">140</div>
<div class="t" style="right:241.5px;top:381.23px;font-size:8.8px;line-height:12px;">$30.22</div>
<div class="r" style="left:460.5px;top:393.0px;width:33.0px;height:13.75px;background:#fff"></div>
<div class="r" style="left:374.5px;top:393.0px;width:27.0px;height:13.75px;background:#fff"></div>
<div class="t" style="left:21.5px;top:394.98px;font-size:8.8px;line-height:12px;">NV-FLASH</div>
<div class="t" style="left:80px;top:394.98px;font-size:8.8px;line-height:12px;">NERFA (Eraring Fly Ash)</div>
<div class="t" style="left:188.5px;top:394.98px;font-size:8.8px;line-height:12px;">Ash</div>
<div class="t" style="right:524.0px;top:394.98px;font-size:8.8px;line-height:12px;">-</div>
<div class="t" style="right:497.5px;top:394.98px;font-size:8.8px;line-height:12px;">-</div>
<div class="t" style="right:463.0px;top:394.98px;font-size:8.8px;line-height:12px;">2100</div>
<div class="t" style="right:428.0px;top:394.98px;font-size:8.8px;line-height:12px;">57</div>
<div class="t" style="right:401.0px;top:394.98px;font-size:8.8px;line-height:12px;">-</div>
<div class="t" style="right:374.5px;top:394.98px;font-size:8.8px;line-height:12px;">n/a</div>
<div class="t" style="right:342.0px;top:394.98px;font-size:8.8px;line-height:12px;">n/a</div>
<div class="t" style="right:309.0px;top:394.98px;font-size:9px;line-height:12px;font-weight:bold;font-family:'Liberation Serif',serif;">120</div>
<div class="t" style="right:276.5px;top:394.98px;font-size:8.8px;line-height:12px;">120</div>
<div class="t" style="right:241.5px;top:394.98px;font-size:8.8px;line-height:12px;">$6.65</div>
<div class="r" style="left:19.5px;top:406.75px;width:58.5px;height:13.75px;background:#80FFD4"></div>
<div class="r" style="left:6.9px;top:408.55px;width:11px;height:10.6px;background:#fff;border:1px solid #D8D6CC"></div>
<svg class="r" style="left:6px;top:406.75px" width="14" height="14"><path d="M2.1 6.0 L5 9.6 L9.8 3.8" stroke="#000" stroke-width="2.5" fill="none"/></svg>
<div class="t" style="left:21.5px;top:408.73px;font-size:8.8px;line-height:12px;">NSQ2014</div>
<div class="t" style="left:80px;top:408.73px;font-size:8.8px;line-height:12px;">NSQ2014 (Seaham</div>
<div class="t" style="left:188.5px;top:408.73px;font-size:8.8px;line-height:12px;">Aggregate</div>
<div class="t" style="right:524.0px;top:408.73px;font-size:8.8px;line-height:12px;">0.7</div>
<div class="t" style="right:497.5px;top:408.73px;font-size:8.8px;line-height:12px;">0.7</div>
<div class="t" style="right:463.0px;top:408.73px;font-size:8.8px;line-height:12px;">2580</div>
<div class="t" style="right:428.0px;top:408.73px;font-size:8.8px;line-height:12px;">231</div>
<div class="t" style="right:401.0px;top:408.73px;font-size:8.8px;line-height:12px;">n/a</div>
<div class="t" style="right:374.5px;top:408.73px;font-size:8.8px;line-height:12px;">n/a</div>
<div class="t" style="right:342.0px;top:408.73px;font-size:8.8px;line-height:12px;">32.6</div>
<div class="t" style="right:309.0px;top:408.73px;font-size:9px;line-height:12px;font-weight:bold;font-family:'Liberation Serif',serif;">596</div>
<div class="t" style="right:276.5px;top:408.73px;font-size:8.8px;line-height:12px;">596</div>
<div class="t" style="right:241.5px;top:408.73px;font-size:8.8px;line-height:12px;">$20.76</div>
<div class="r" style="left:19.5px;top:420.5px;width:58.5px;height:13.75px;background:#8A2BE2"></div>
<div class="r" style="left:6.9px;top:422.3px;width:11px;height:10.6px;background:#fff;border:1px solid #D8D6CC"></div>
<svg class="r" style="left:6px;top:420.50px" width="14" height="14"><path d="M2.1 6.0 L5 9.6 L9.8 3.8" stroke="#000" stroke-width="2.5" fill="none"/></svg>
<div class="t" style="left:21.5px;top:422.48px;font-size:8.8px;line-height:12px;">NSQ1007</div>
<div class="t" style="left:80px;top:422.48px;font-size:8.8px;line-height:12px;">NSQ1007 (Seaham</div>
<div class="t" style="left:188.5px;top:422.48px;font-size:8.8px;line-height:12px;">Aggregate</div>
<div class="t" style="right:524.0px;top:422.48px;font-size:8.8px;line-height:12px;">1.0</div>
<div class="t" style="right:497.5px;top:422.48px;font-size:8.8px;line-height:12px;">1.0</div>
<div class="t" style="right:463.0px;top:422.48px;font-size:8.8px;line-height:12px;">2560</div>
<div class="t" style="right:428.0px;top:422.48px;font-size:8.8px;line-height:12px;">165</div>
<div class="t" style="right:401.0px;top:422.48px;font-size:8.8px;line-height:12px;">n/a</div>
<div class="t" style="right:374.5px;top:422.48px;font-size:8.8px;line-height:12px;">n/a</div>
<div class="t" style="right:342.0px;top:422.48px;font-size:8.8px;line-height:12px;">23.2</div>
<div class="t" style="right:309.0px;top:422.48px;font-size:9px;line-height:12px;font-weight:bold;font-family:'Liberation Serif',serif;">421</div>
<div class="t" style="right:276.5px;top:422.48px;font-size:8.8px;line-height:12px;">421</div>
<div class="t" style="right:241.5px;top:422.48px;font-size:8.8px;line-height:12px;">$14.68</div>
<div class="r" style="left:19.5px;top:434.25px;width:58.5px;height:13.75px;background:#DEB887"></div>
<div class="r" style="left:6.9px;top:436.05px;width:11px;height:10.6px;background:#fff;border:1px solid #D8D6CC"></div>
<svg class="r" style="left:6px;top:434.25px" width="14" height="14"><path d="M2.1 6.0 L5 9.6 L9.8 3.8" stroke="#000" stroke-width="2.5" fill="none"/></svg>
<div class="t" style="left:21.5px;top:436.23px;font-size:8.8px;line-height:12px;">NV-MS</div>
<div class="t" style="left:80px;top:436.23px;font-size:8.8px;line-height:12px;">NSQMS (Seaham Man</div>
<div class="t" style="left:188.5px;top:436.23px;font-size:8.8px;line-height:12px;">Sand</div>
<div class="t" style="right:524.0px;top:436.23px;font-size:8.8px;line-height:12px;">6.0</div>
<div class="t" style="right:497.5px;top:436.23px;font-size:8.8px;line-height:12px;">1.8</div>
<div class="t" style="right:463.0px;top:436.23px;font-size:8.8px;line-height:12px;">2520</div>
<div class="t" style="right:428.0px;top:436.23px;font-size:8.8px;line-height:12px;">113</div>
<div class="t" style="right:401.0px;top:436.23px;font-size:8.8px;line-height:12px;">n/a</div>
<div class="t" style="right:374.5px;top:436.23px;font-size:8.8px;line-height:12px;">n/a</div>
<div class="t" style="right:342.0px;top:436.23px;font-size:8.8px;line-height:12px;">16.0</div>
<div class="t" style="right:309.0px;top:436.23px;font-size:9px;line-height:12px;font-weight:bold;font-family:'Liberation Serif',serif;">285</div>
<div class="t" style="right:276.5px;top:436.23px;font-size:8.8px;line-height:12px;">297</div>
<div class="t" style="right:241.5px;top:436.23px;font-size:8.8px;line-height:12px;">$7.24</div>
<div class="r" style="left:19.5px;top:448.0px;width:58.5px;height:13.75px;background:#7FFF00"></div>
<div class="r" style="left:6.9px;top:449.8px;width:11px;height:10.6px;background:#fff;border:1px solid #D8D6CC"></div>
<svg class="r" style="left:6px;top:448.00px" width="14" height="14"><path d="M2.1 6.0 L5 9.6 L9.8 3.8" stroke="#000" stroke-width="2.5" fill="none"/></svg>
<div class="t" style="left:21.5px;top:449.98px;font-size:8.8px;line-height:12px;">NV-DS</div>
<div class="t" style="left:80px;top:449.98px;font-size:8.8px;line-height:12px;">NSTDS (Stockton Dune</div>
<div class="t" style="left:188.5px;top:449.98px;font-size:8.8px;line-height:12px;">Sand</div>
<div class="t" style="right:524.0px;top:449.98px;font-size:8.8px;line-height:12px;">3.5</div>
<div class="t" style="right:497.5px;top:449.98px;font-size:8.8px;line-height:12px;">0.5</div>
<div class="t" style="right:463.0px;top:449.98px;font-size:8.8px;line-height:12px;">2600</div>
<div class="t" style="right:428.0px;top:449.98px;font-size:8.8px;line-height:12px;">200</div>
<div class="t" style="right:401.0px;top:449.98px;font-size:8.8px;line-height:12px;">n/a</div>
<div class="t" style="right:374.5px;top:449.98px;font-size:8.8px;line-height:12px;">n/a</div>
<div class="t" style="right:342.0px;top:449.98px;font-size:8.8px;line-height:12px;">28.2</div>
<div class="t" style="right:309.0px;top:449.98px;font-size:9px;line-height:12px;font-weight:bold;font-family:'Liberation Serif',serif;">519</div>
<div class="t" style="right:276.5px;top:449.98px;font-size:8.8px;line-height:12px;">535</div>
<div class="t" style="right:241.5px;top:449.98px;font-size:8.8px;line-height:12px;">$9.01</div>
<div class="r" style="left:460.5px;top:461.75px;width:33.0px;height:13.75px;background:#fff"></div>
<div class="t" style="left:21.5px;top:463.73px;font-size:8.8px;line-height:12px;">NV-WR</div>
<div class="t" style="left:80px;top:463.73px;font-size:8.8px;line-height:12px;">NP370PC (Pozz 370 PC)</div>
<div class="t" style="left:188.5px;top:463.73px;font-size:8.8px;line-height:12px;">Admix (/cem)</div>
<div class="t" style="right:524.0px;top:463.73px;font-size:8.8px;line-height:12px;">n/a</div>
<div class="t" style="right:497.5px;top:463.73px;font-size:8.8px;line-height:12px;">n/a</div>
<div class="t" style="right:463.0px;top:463.73px;font-size:8.8px;line-height:12px;">-</div>
<div class="t" style="right:428.0px;top:463.73px;font-size:8.8px;line-height:12px;">n/a</div>
<div class="t" style="right:401.0px;top:463.73px;font-size:8.8px;line-height:12px;">n/a</div>
<div class="t" style="right:374.5px;top:463.73px;font-size:8.8px;line-height:12px;">1.00</div>
<div class="t" style="right:342.0px;top:463.73px;font-size:8.8px;line-height:12px;">n/a</div>
<div class="t" style="right:309.0px;top:463.73px;font-size:9px;line-height:12px;font-weight:bold;font-family:'Liberation Serif',serif;">300</div>
<div class="t" style="right:276.5px;top:463.73px;font-size:8.8px;line-height:12px;">780</div>
<div class="t" style="right:241.5px;top:463.73px;font-size:8.8px;line-height:12px;">$0.66</div>
<div class="r" style="left:460.5px;top:475.5px;width:33.0px;height:13.75px;background:#fff"></div>
<div class="t" style="left:21.5px;top:477.48px;font-size:8.8px;line-height:12px;">NV-AEA2</div>
<div class="t" style="left:80px;top:477.48px;font-size:8.8px;line-height:12px;">NMA940A (MICROAIR</div>
<div class="t" style="left:188.5px;top:477.48px;font-size:8.8px;line-height:12px;">Admix (mL/m3)</div>
<div class="t" style="right:524.0px;top:477.48px;font-size:8.8px;line-height:12px;">n/a</div>
<div class="t" style="right:497.5px;top:477.48px;font-size:8.8px;line-height:12px;">n/a</div>
<div class="t" style="right:463.0px;top:477.48px;font-size:8.8px;line-height:12px;">-</div>
<div class="t" style="right:428.0px;top:477.48px;font-size:8.8px;line-height:12px;">n/a</div>
<div class="t" style="right:401.0px;top:477.48px;font-size:8.8px;line-height:12px;">n/a</div>
<div class="t" style="right:374.5px;top:477.48px;font-size:8.8px;line-height:12px;">1.00</div>
<div class="t" style="right:342.0px;top:477.48px;font-size:8.8px;line-height:12px;">n/a</div>
<div class="t" style="right:309.0px;top:477.48px;font-size:9px;line-height:12px;font-weight:bold;font-family:'Liberation Serif',serif;">100</div>
<div class="t" style="right:276.5px;top:477.48px;font-size:8.8px;line-height:12px;">100</div>
<div class="t" style="right:241.5px;top:477.48px;font-size:8.8px;line-height:12px;">$0.08</div>
<div class="r" style="left:6px;top:393.0px;width:555px;height:1px;background:#D4D0C4"></div>
<div class="r" style="left:6px;top:406.75px;width:555px;height:1px;background:#D4D0C4"></div>
<div class="r" style="left:6px;top:420.5px;width:555px;height:1px;background:#D4D0C4"></div>
<div class="r" style="left:6px;top:434.25px;width:555px;height:1px;background:#D4D0C4"></div>
<div class="r" style="left:6px;top:448.0px;width:555px;height:1px;background:#D4D0C4"></div>
<div class="r" style="left:6px;top:461.75px;width:555px;height:1px;background:#D4D0C4"></div>
<div class="r" style="left:6px;top:475.5px;width:555px;height:1px;background:#D4D0C4"></div>
<div class="r" style="left:19.5px;top:379.25px;width:1px;height:110.0px;background:#D4D0C4"></div>
<div class="r" style="left:78px;top:379.25px;width:1px;height:110.0px;background:#D4D0C4"></div>
<div class="r" style="left:186.5px;top:379.25px;width:1px;height:110.0px;background:#D4D0C4"></div>
<div class="r" style="left:251.5px;top:379.25px;width:1px;height:110.0px;background:#D4D0C4"></div>
<div class="r" style="left:278.5px;top:379.25px;width:1px;height:110.0px;background:#D4D0C4"></div>
<div class="r" style="left:305px;top:379.25px;width:1px;height:110.0px;background:#D4D0C4"></div>
<div class="r" style="left:339.5px;top:379.25px;width:1px;height:110.0px;background:#D4D0C4"></div>
<div class="r" style="left:374.5px;top:379.25px;width:1px;height:110.0px;background:#D4D0C4"></div>
<div class="r" style="left:401.5px;top:379.25px;width:1px;height:110.0px;background:#D4D0C4"></div>
<div class="r" style="left:428px;top:379.25px;width:1px;height:110.0px;background:#D4D0C4"></div>
<div class="r" style="left:460.5px;top:379.25px;width:1px;height:110.0px;background:#D4D0C4"></div>
<div class="r" style="left:493.5px;top:379.25px;width:1px;height:110.0px;background:#D4D0C4"></div>
<div class="r" style="left:526px;top:379.25px;width:1px;height:110.0px;background:#D4D0C4"></div>
<div class="r" style="left:6px;top:489.25px;width:556px;height:1px;background:#000"></div>
<div class="r" style="left:561px;top:366px;width:1px;height:124.25px;background:#000"></div>
<div class="r" style="left:736px;top:453px;width:16px;height:14px;background:#FFFFE8;border:1px solid #333"></div>
<div class="t" style="left:737px;top:455.10px;font-size:8.8px;line-height:12px;">n/a</div>
<div class="r" style="left:3px;top:501px;width:797px;height:2px;background:#8A887C"></div>
<svg class="r" style="left:0;top:0" width="800" height="503"><g stroke="#FF0000" stroke-width="2.2" fill="none" stroke-linecap="round"><path d="M163.5 165 L43 213.8"/><path d="M43 213.8 L67.5 198.4"/><path d="M43 213.8 L75 208"/></g></svg>
</body></html>
